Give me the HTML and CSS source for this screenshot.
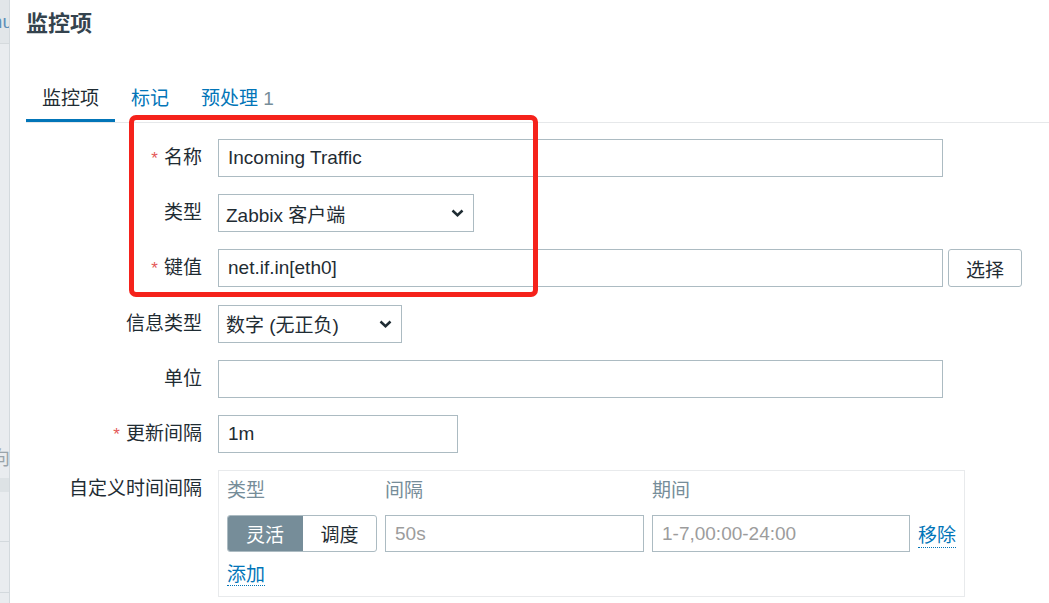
FILE: index.html
```html
<!DOCTYPE html>
<html lang="zh-CN">
<head>
<meta charset="utf-8">
<title>监控项</title>
<link rel="stylesheet" href="styles.css">
</head>
<body>
<div class="page">
  <aside class="strip">
    <div class="strip-top"><span>Menu</span></div>
    <div class="strip-gap"></div>
    <div class="strip-text"><span>方向</span></div>
    <div class="strip-band"></div>
    <div class="strip-cell"></div>
    <div class="strip-cell2"></div>
  </aside>
  <main class="main">
    <h1 class="title">监控项</h1>
    <nav class="tabs">
      <a class="tab active">监控项</a>
      <a class="tab">标记</a>
      <a class="tab">预处理 <span class="count">1</span></a>
    </nav>
    <div class="form">
      <div class="lbl"><span class="req">*</span>名称</div>
      <div class="field"><input class="input w-full" value="Incoming Traffic"></div>

      <div class="lbl">类型</div>
      <div class="field">
        <div class="select w-type"><span>Zabbix 客户端</span>
          <svg class="chev" width="13" height="8" viewBox="0 0 13 8"><path d="M1.5 1.5 L6.5 6.2 L11.5 1.5" fill="none" stroke="#1f2c33" stroke-width="2.5"/></svg>
        </div>
      </div>

      <div class="lbl"><span class="req">*</span>键值</div>
      <div class="field row-key">
        <input class="input w-full" value="net.if.in[eth0]">
        <button class="btn">选择</button>
      </div>

      <div class="lbl">信息类型</div>
      <div class="field">
        <div class="select w-info"><span>数字 (无正负)</span>
          <svg class="chev" width="13" height="8" viewBox="0 0 13 8"><path d="M1.5 1.5 L6.5 6.2 L11.5 1.5" fill="none" stroke="#1f2c33" stroke-width="2.5"/></svg>
        </div>
      </div>

      <div class="lbl">单位</div>
      <div class="field"><input class="input w-full" value=""></div>

      <div class="lbl"><span class="req">*</span>更新间隔</div>
      <div class="field"><input class="input w-delay" value="1m"></div>

      <div class="lbl">自定义时间间隔</div>
      <div class="field">
        <div class="intervals">
          <div class="iv-grid iv-head">
            <div>类型</div>
            <div>间隔</div>
            <div>期间</div>
            <div></div>
          </div>
          <div class="iv-grid iv-row">
            <div class="seg"><span class="seg-on">灵活</span><span class="seg-off">调度</span></div>
            <input class="input iv-input" placeholder="50s">
            <input class="input iv-input" placeholder="1-7,00:00-24:00">
            <div class="iv-act"><a class="link">移除</a></div>
          </div>
          <div class="iv-add"><a class="link">添加</a></div>
        </div>
      </div>
    </div>
  </main>
  <div class="annot"></div>
</div>
</body>
</html>
```

FILE: styles.css
```css
html, body {
  margin: 0;
  padding: 0;
  background: #fff;
}
body {
  font-family: "Liberation Sans", Arial, "Noto Sans CJK SC", sans-serif;
  font-size: 19px;
  color: #1f2c33;
}
.page {
  display: flex;
  min-height: 603px;
  position: relative;
  overflow: hidden;
}

/* left strip (partially visible sidebar) */
.strip {
  flex: none;
  width: 9px;
  border-right: 1px solid #d3d9dd;
  background: #e9ecef;
  overflow: hidden;
  display: flex;
  flex-direction: column;
}
.strip-top {
  height: 43px;
  background: #e2e6e9;
  border-bottom: 1px solid #d5dadd;
  display: flex;
  justify-content: flex-end;
  align-items: center;
  color: #5f8fb8;
  white-space: nowrap;
  font-size: 19px;
  margin-right: -4px;
}
.strip-gap { height: 399px; }
.strip-text {
  height: 26px;
  display: flex;
  justify-content: flex-end;
  align-items: center;
  color: #9aa4aa;
  white-space: nowrap;
  margin-right: -1px;
}
.strip-band {
  margin-top: 9px;
  height: 14px;
  background: #dde2e5;
}
.strip-cell {
  height: 49px;
  border-bottom: 1px solid #d3d9dd;
}
.strip-cell2 {
  height: 50px;
  border-bottom: 1px solid #d3d9dd;
}

/* main */
.main {
  flex: 1;
  padding-left: 16px;
}
.title {
  margin: 0;
  padding-top: 9px;
  font-size: 22px;
  line-height: 30px;
  font-weight: bold;
  color: #34434e;
}
.tabs {
  display: flex;
  margin-top: 37px;
  border-bottom: 1px solid #e6e8ea;
}
.tab {
  padding: 11px 16px 8px;
  line-height: 24px;
  border-bottom: 3px solid transparent;
  color: #0275b8;
  cursor: pointer;
}
.tab.active {
  color: #1f2c33;
  border-bottom-color: #0275b8;
}
.count { color: #768d99; }

/* form */
.form {
  display: grid;
  grid-template-columns: 176px auto;
  column-gap: 16px;
  row-gap: 17.2px;
  padding-top: 16px;
  align-items: start;
}
.lbl {
  text-align: right;
  height: 38px;
  line-height: 38px;
  white-space: nowrap;
}
.req {
  color: #e45959;
  font-size: 17px;
  line-height: 1;
  margin-right: 6px;
}
.field {
  display: flex;
  align-items: center;
}
.row-key { gap: 5px; }

.input {
  box-sizing: border-box;
  height: 38px;
  border: 1px solid #acbbc2;
  border-radius: 0;
  padding: 0 9px;
  font: inherit;
  color: #1f2c33;
  background: #fff;
  outline: none;
  margin: 0;
}
.input::placeholder { color: #9c9c9c; }
.w-full { width: 725px; }
.w-delay { width: 240px; }

.select {
  box-sizing: border-box;
  height: 38px;
  border: 1px solid #acbbc2;
  padding: 0 9px 0 7px;
  display: flex;
  align-items: center;
  justify-content: space-between;
  background: #fff;
}
.w-type { width: 256px; }
.w-info { width: 184px; }
.chev { flex: none; }

.btn {
  box-sizing: border-box;
  height: 38px;
  width: 74px;
  border: 1px solid #acbbc2;
  border-radius: 3px;
  background: #fff;
  font: inherit;
  color: #1f2c33;
  padding: 0;
  margin: 0;
}

/* custom intervals */
.intervals {
  box-sizing: border-box;
  width: 747px;
  border: 1px solid #e8eaec;
  padding: 8px 8px 9px 8px;
}
.iv-grid {
  display: grid;
  grid-template-columns: 150px 259px 258px auto;
  column-gap: 8px;
}
.iv-head {
  line-height: 24px;
  color: #768d99;
  margin-bottom: 12px;
}
.iv-row {
  align-items: center;
}
.iv-input {
  height: 37px;
  width: 100%;
}
.seg {
  box-sizing: border-box;
  display: flex;
  height: 37px;
  border: 1px solid #acbbc2;
  border-radius: 3px;
  overflow: hidden;
}
.seg-on,
.seg-off {
  display: flex;
  align-items: center;
  justify-content: center;
}
.seg-on {
  width: 76px;
  margin: -1px 0 -1px -1px;
  background: #768d99;
  color: #fff;
}
.seg-off { flex: 1; }
.iv-act { display: flex; align-items: center; }
.iv-add {
  margin-top: 11px;
  line-height: 24px;
}
.link {
  color: #0275b8;
  text-decoration: none;
  border-bottom: 1px dotted #0275b8;
  cursor: pointer;
}

/* red annotation frame drawn over the screenshot */
.annot {
  position: absolute;
  left: 129px;
  top: 115px;
  width: 399px;
  height: 172px;
  border: 5px solid #f5221b;
  border-radius: 7px;
  pointer-events: none;
}
```
